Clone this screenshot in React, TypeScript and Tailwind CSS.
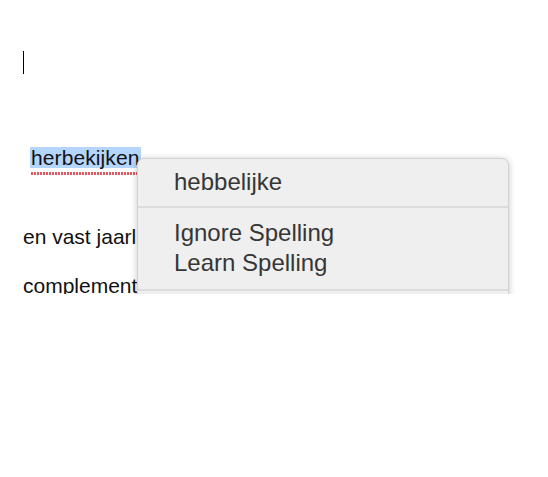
import React from "react";

export default function App() {
  return (
    <div className="w-[548px] h-[477px] bg-white">
      <div className="relative h-[294px] overflow-hidden bg-white font-['Liberation_Sans',Arial,sans-serif] text-[#111111]">
        {/* caret */}
        <div className="pt-[51px] pl-[23px]">
          <div className="w-px h-[23px] bg-black" />
        </div>

        {/* herbekijken */}
        <div className="mt-[73px] pl-[30px]">
          <span className="inline-block h-[21px] leading-[21px] bg-[#b4d5fe] px-[1px] text-[21px] tracking-[0.1px]">
            herbekijken
          </span>
          <div className="ml-[1px] h-[3px] w-[107px] bg-[linear-gradient(to_right,#e8555a_2px,transparent_2px)] bg-[length:3px_3px]" />
        </div>

        {/* other lines */}
        <div className="mt-[50px] pl-[23px] text-[21px] leading-[24px] whitespace-nowrap">
          en vast jaarlijks
        </div>
        <div className="mt-[25px] pl-[23px] text-[21px] leading-[24px] whitespace-nowrap">
          complementair
        </div>

        {/* context menu */}
        <div className="absolute left-[137px] top-[158px] w-[372px] h-[200px] rounded-[7px] bg-[#efefef] border border-[#d2d2d2] shadow-[0_1px_7px_rgba(0,0,0,0.22)] text-[24px] leading-[30px] text-[#363636] font-['Liberation_Sans',Arial,sans-serif]">
          <div className="pt-[8px] pl-[36px]">hebbelijke</div>
          <div className="mt-[9px] h-[2px] bg-[#dcdcdc]" />
          <div className="mt-[10px] pl-[36px]">Ignore Spelling</div>
          <div className="pl-[36px]">Learn Spelling</div>
          <div className="mt-[11px] h-[2px] bg-[#dcdcdc]" />
        </div>
      </div>
    </div>
  );
}
